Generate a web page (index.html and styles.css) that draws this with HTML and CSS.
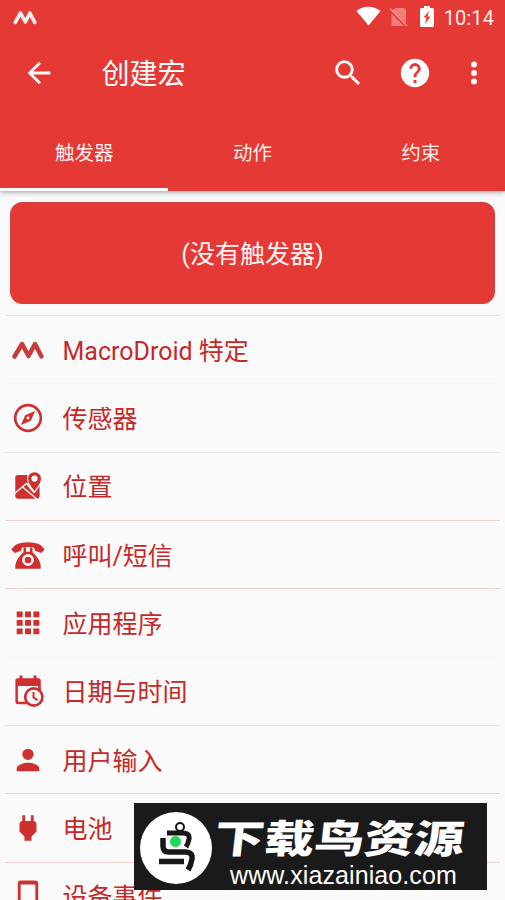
FILE: index.html
```html
<!DOCTYPE html>
<html lang="zh-CN">
<head>
<meta charset="utf-8">
<title>创建宏</title>
<link rel="stylesheet" href="styles.css">
</head>
<body>
<div class="screen">
  <header class="header">
    <div class="status">
      <svg class="status-logo" viewBox="0 0 32 20"><path d="M3 16.500 10 4l6.500 12L22.500 4 29 16.500" fill="none" stroke="currentColor" stroke-width="4.800" stroke-linecap="round" stroke-linejoin="round"/></svg>
      <div class="status-right">
        <svg class="wifi" viewBox="0 0 26 20"><path d="M.5 4.700Q12.500-4 25.500 4.700L13 20z" fill="currentColor"/></svg>
        <svg class="sim" viewBox="0 0 19 20"><path d="M7 1h8q2 0 2 2v13L3 3.500zM2.500 6.500 15 19H4q-1.500 0-1.500-1.500z" fill="currentColor" opacity=".38"/><path d="M1 1.500 18 19" stroke="currentColor" stroke-width="1.500" opacity=".5"/></svg>
        <svg class="charge" viewBox="0 0 14 21"><path fill-rule="evenodd" d="M4 0h6v2h2.500q1.500 0 1.500 1.500v16q0 1.500-1.500 1.500h-11Q0 21 0 19.500v-16Q0 2 1.500 2H4zM9 5 3.500 11.500h3L5 18 10.500 10.500h-3z" fill="currentColor"/></svg>
        <span class="clock">10:14</span>
      </div>
    </div>
    <div class="toolbar">
      <svg class="icon" viewBox="0 0 24 24"><path d="M20 11H7.830l5.590-5.590L12 4l-8 8 8 8 1.410-1.410L7.830 13H20z"/></svg>
      <h1 class="title">创建宏</h1>
      <svg class="icon search" viewBox="0 0 24 24"><path d="M15.500 14h-.79l-.28-.27A6.470 6.470 0 0 0 16 9.500 6.500 6.500 0 1 0 9.500 16c1.610 0 3.090-.59 4.230-1.570l.27.28v.79l5 4.990L20.490 19zm-6 0a4.500 4.500 0 1 1 0-9 4.500 4.500 0 0 1 0 9z"/></svg>
      <svg class="icon help" viewBox="0 0 24 24"><path d="M12 2a10 10 0 1 0 0 20 10 10 0 0 0 0-20zm1 17h-2v-2h2zm2.070-7.750-.9.920C13.450 12.900 13 13.500 13 15h-2v-.5c0-1.100.45-2.100 1.170-2.830l1.240-1.260c.37-.36.59-.86.59-1.410a2 2 0 1 0-4 0H8a4 4 0 1 1 8 0c0 .88-.36 1.680-.93 2.250z"/></svg>
      <svg class="icon more" viewBox="0 0 24 24"><circle cx="12" cy="6" r="2.100"/><circle cx="12" cy="12" r="2.100"/><circle cx="12" cy="18" r="2.100"/></svg>
    </div>
    <nav class="tabs">
      <div class="tab active">触发器</div>
      <div class="tab">动作</div>
      <div class="tab">约束</div>
    </nav>
  </header>
  <section class="card">(没有触发器)</section>
  <ul class="list">
    <li class="row faint">
      <svg class="icon" viewBox="0 0 34 34"><path d="M3.500 23.500 11 11l6.500 12L24 11l6.500 12.500" fill="none" stroke="#c83b3b" stroke-width="4.500" stroke-linecap="round" stroke-linejoin="round"/></svg>
      <span>MacroDroid 特定</span>
    </li>
    <li class="row gray">
      <svg class="icon" viewBox="0 0 24 24"><path fill-rule="evenodd" d="M12 2a10 10 0 1 0 0 20 10 10 0 0 0 0-20zm0 1.900a8.100 8.100 0 1 1 0 16.200 8.100 8.100 0 0 1 0-16.200zM17 7l-7 3-3 7 7-3zm-5 4a1 1 0 1 1 0 2 1 1 0 0 1 0-2z"/></svg>
      <span>传感器</span>
    </li>
    <li class="row">
      <svg class="icon" viewBox="0 0 34 34">
        <rect x="4.300" y="6" width="24.300" height="23.800" rx="2.800"/>
        <path d="M3.500 24.500 15.500 14.500l7.500 9M11.500 18 27 31" fill="none" stroke="#fafafa" stroke-width="1.400"/>
        <path d="M23.500 3.500A6.200 6.200 0 0 0 17.300 9.700q0 4.500 6.200 12.300 6.200-7.800 6.200-12.300a6.200 6.200 0 0 0-6.200-6.200z" fill="#fafafa" stroke="#fafafa" stroke-width="2.800"/>
        <path d="M23.500 3.200A6.500 6.500 0 0 0 17 9.700q0 4.500 6.500 12.300Q30 14.200 30 9.700a6.500 6.500 0 0 0-6.500-6.500z"/>
        <circle cx="23.500" cy="9.600" r="3.100" fill="#fafafa"/>
      </svg>
      <span>位置</span>
    </li>
    <li class="row">
      <svg class="icon" viewBox="0 0 34 34">
        <path d="M.3 11.500Q4 4.200 17 4.200t16.700 7.300l-3.500 3.500-6.200-2.300-1-3.200q-6-1.200-12 0l-1 3.200L3.800 15z"/>
        <path d="M12.500 9.500H15v4.300h4V9.500h2.500v4.800q7.300 6.700 8.200 13.200v3.300H4.300v-3.300q.9-6.500 8.200-13.200z"/>
        <circle cx="17" cy="22" r="4.600" stroke="#fafafa" stroke-width="2.200"/>
        <circle cx="17" cy="22" r="4.600" fill="none" stroke="#fafafa" stroke-width="2.200"/>
      </svg>
      <span>呼叫/短信</span>
    </li>
    <li class="row faint">
      <svg class="icon" viewBox="0 0 24 24"><path d="M4 8h4.200V3.900H4zm5.900 12h4.200v-4.100H9.900zM4 20h4.200v-4.100H4zm0-6h4.200V9.900H4zm5.900 0h4.200V9.900H9.900zm5.900-10.100V8H20V3.900zM9.900 8h4.200V3.900H9.900zm5.900 6H20V9.900h-4.200zm0 6H20v-4.100h-4.200z"/></svg>
      <span>应用程序</span>
    </li>
    <li class="row pale">
      <svg class="icon" viewBox="0 0 34 34"><path fill-rule="evenodd" d="M8.500 1.500h3v2.700h11V1.500h3v2.700h1.700q2.600 0 2.600 2.600V17h-2.700v-5H6.900v15q0 .8.800.8h8v2.400H7q-2.600 0-2.600-2.600V6.800q0-2.600 2.600-2.600h1.500z"/><circle cx="22.800" cy="23" r="8.600" fill="#fafafa" stroke="currentColor" stroke-width="2.700"/><path d="M22.500 18v5.500l4 2.600" fill="none" stroke="currentColor" stroke-width="2"/></svg>
      <span>日期与时间</span>
    </li>
    <li class="row">
      <svg class="icon" viewBox="0 0 24 24"><path d="M12 12a4 4 0 1 0 0-8 4 4 0 0 0 0 8zm0 2c-2.670 0-8 1.340-8 4v2h16v-2c0-2.660-5.330-4-8-4z"/></svg>
      <span>用户输入</span>
    </li>
    <li class="row">
      <svg class="icon" viewBox="0 0 24 24"><path d="M16.010 7 16 3h-2v4h-4V3H8v4h-.010C7 6.990 6 7.990 6 8.990v5.490L9.500 18v3h5v-3l3.500-3.510v-5.500c0-1-1-2-1.990-1.990z"/></svg>
      <span>电池</span>
    </li>
    <li class="row">
      <svg class="icon" viewBox="0 0 24 24"><path fill-rule="evenodd" d="M7 1h10q2.200 0 2.200 2v18q0 2-2.200 2H7q-2.200 0-2.200-2V3Q4.800 1 7 1zm-.2 2.900v15.300h10.400V3.900z"/></svg>
      <span>设备事件</span>
    </li>
  </ul>
  <aside class="watermark">
    <svg class="bird" viewBox="0 0 74 74">
      <circle cx="37" cy="37" r="36" fill="#fff"/>
      <g fill="none" stroke="#171717">
        <circle cx="41" cy="16" r="4" stroke-width="2"/>
        <path d="M28 22h16q7 0 6 6-1 5-3 8" stroke-width="5"/>
        <path d="M24 27v8q0 6 6 6h16q8 0 7 7-1 6-4 11" stroke-width="5.500"/>
        <path d="M20 50.500h25" stroke-width="5.500"/>
      </g>
      <circle cx="36.500" cy="30.500" r="5.500" fill="#22d957"/>
    </svg>
    <div class="brand">
      <div class="brand-name">下载鸟资源</div>
      <div class="brand-url">www.xiazainiao.com</div>
    </div>
  </aside>
</div>
</body>
</html>
```
FILE: styles.css
```css
* { box-sizing: border-box; }
body {
  margin: 0;
  background: #fafafa;
  font-family: Roboto, "Noto Sans CJK SC", sans-serif;
}
.screen {
  position: relative;
  width: 505px;
  height: 900px;
  overflow: hidden;
}
.header {
  height: 191px;
  background: #e53935;
  color: #fff;
  box-shadow: 0 1px 5px rgba(0, 0, 0, .4);
}
.status {
  display: flex;
  justify-content: space-between;
  height: 39px;
  padding: 6px 11px 0 13px;
  color: #ffeeed;
}
.status-logo { width: 24px; height: 15px; margin-top: 4px; }
.status-right { display: flex; align-items: flex-start; }
.wifi { width: 25px; height: 20px; color: #fff; }
.sim { width: 19px; height: 20px; margin: 1px 0 0 8px; }
.charge { width: 14px; height: 21px; margin-left: 12px; color: #fff; }
.clock { margin-left: 10px; font-size: 20px; line-height: 24px; letter-spacing: .1px; }
.icon { width: 34px; height: 34px; flex: none; fill: currentColor; }
.toolbar {
  display: flex;
  align-items: center;
  height: 68px;
  padding: 0 14px 0 22px;
}
.title {
  margin: 3px 0 0 45.5px;
  font-size: 28px;
  font-weight: 400;
  line-height: 40px;
}
.search { margin-left: auto; }
.help { margin-left: 33px; }
.more { margin-left: 25px; }
.tabs { display: flex; height: 84px; }
.tab {
  flex: 1;
  display: flex;
  align-items: center;
  justify-content: center;
  padding-top: 8px;
  border-bottom: 3px solid transparent;
  font-size: 19.5px;
  color: #fff0ef;
}
.tab.active { border-color: #fff; }
.card {
  display: flex;
  align-items: center;
  justify-content: center;
  height: 102px;
  margin: 11px 10px 0;
  padding-bottom: 2px;
  border: 1px solid #d04440;
  border-radius: 12px;
  background: #e53935;
  color: #fff5f5;
  font-size: 25px;
}
.list {
  margin: 11px 5px 0;
  padding: 0;
  list-style: none;
  border-top: 1px solid #f5dcdd;
}
.row {
  display: flex;
  align-items: center;
  gap: 17.5px;
  height: 68.35px;
  padding-left: 6px;
  border-bottom: 1px solid #f1d0d1;
  color: #c62828;
  font-size: 25px;
}
.row span { padding-bottom: 2px; }
.row .icon { color: #cd302f; }
.row.faint { border-color: #f7f6f6; }
.row.gray { border-color: #ece8e8; }
.row.pale { border-color: #f3e3e3; }
.watermark {
  position: absolute;
  left: 134px;
  top: 803px;
  width: 353px;
  height: 87px;
  display: flex;
  padding: 8px 0 0 5px;
  background: #1a1a1a;
  color: #fff;
}
.bird { width: 74px; height: 74px; flex: none; }
.brand { padding-left: 2px; }
.brand-name {
  width: 195px;
  font-family: "Noto Sans CJK SC", sans-serif;
  font-size: 39px;
  font-weight: 900;
  line-height: 50px;
  white-space: nowrap;
  transform-origin: 0 50%;
  transform: scaleX(1.28) skewX(-5deg);
}
.brand-url {
  padding-left: 15px;
  font-family: "Liberation Sans", sans-serif;
  font-size: 25px;
  line-height: 28px;
  letter-spacing: .1px;
}
```
